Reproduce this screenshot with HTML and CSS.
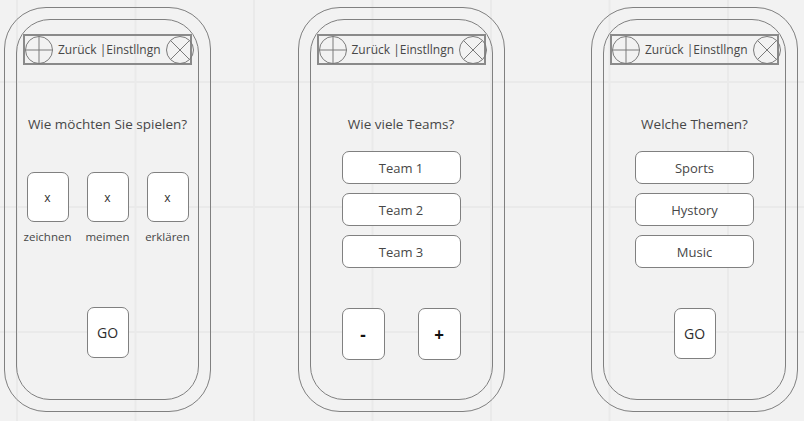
FILE: index.html
```html
<!DOCTYPE html>
<html lang="de">
<head>
    <meta charset="UTF-8">
    <meta name="viewport" content="width=device-width, initial-scale=1.0">
    <title>Spiel Wireframes</title>
    <link rel="stylesheet" href="styles.css">
</head>
<body>
    <div class="board">
        <!-- Screen 1: Spielmodus -->
        <section class="phone">
            <div class="screen">
                <div class="topbar">
                    <svg class="nav-icon" viewBox="0 0 28 28">
                        <circle cx="14" cy="14" r="13.5"/>
                        <path d="M0.5 14H27.5M14 0.5V27.5"/>
                    </svg>
                    <span class="topbar-title">Zurück |Einstllngn</span>
                    <svg class="nav-icon close" viewBox="0 0 28 28">
                        <circle cx="14" cy="14" r="13.5"/>
                        <path d="M4.5 4.5L23.5 23.5M23.5 4.5L4.5 23.5"/>
                    </svg>
                </div>

                <p class="question">Wie möchten Sie spielen?</p>

                <div class="modes">
                    <div class="mode">
                        <button class="tile">x</button>
                        <span class="mode-label">zeichnen</span>
                    </div>
                    <div class="mode">
                        <button class="tile">x</button>
                        <span class="mode-label">meimen</span>
                    </div>
                    <div class="mode">
                        <button class="tile">x</button>
                        <span class="mode-label">erklären</span>
                    </div>
                </div>

                <button class="tile go go-modes">GO</button>
            </div>
        </section>

        <!-- Screen 2: Teams -->
        <section class="phone">
            <div class="screen">
                <div class="topbar">
                    <svg class="nav-icon" viewBox="0 0 28 28">
                        <circle cx="14" cy="14" r="13.5"/>
                        <path d="M0.5 14H27.5M14 0.5V27.5"/>
                    </svg>
                    <span class="topbar-title">Zurück |Einstllngn</span>
                    <svg class="nav-icon close" viewBox="0 0 28 28">
                        <circle cx="14" cy="14" r="13.5"/>
                        <path d="M4.5 4.5L23.5 23.5M23.5 4.5L4.5 23.5"/>
                    </svg>
                </div>

                <p class="question">Wie viele Teams?</p>

                <div class="options">
                    <button class="option">Team 1</button>
                    <button class="option">Team 2</button>
                    <button class="option">Team 3</button>
                </div>

                <div class="stepper">
                    <button class="tile step">-</button>
                    <button class="tile step">+</button>
                </div>
            </div>
        </section>

        <!-- Screen 3: Themen -->
        <section class="phone">
            <div class="screen">
                <div class="topbar">
                    <svg class="nav-icon" viewBox="0 0 28 28">
                        <circle cx="14" cy="14" r="13.5"/>
                        <path d="M0.5 14H27.5M14 0.5V27.5"/>
                    </svg>
                    <span class="topbar-title">Zurück |Einstllngn</span>
                    <svg class="nav-icon close" viewBox="0 0 28 28">
                        <circle cx="14" cy="14" r="13.5"/>
                        <path d="M4.5 4.5L23.5 23.5M23.5 4.5L4.5 23.5"/>
                    </svg>
                </div>

                <p class="question">Welche Themen?</p>

                <div class="options">
                    <button class="option">Sports</button>
                    <button class="option">Hystory</button>
                    <button class="option">Music</button>
                </div>

                <button class="tile go go-topics">GO</button>
            </div>
        </section>
    </div>
</body>
</html>
```

FILE: styles.css
```css
:root {
    --canvas: #f2f2f2;
    --grid-line: #eaeaea;
    --outline: #808080;
    --text: #474747;
    --text-dark: #2e2e2e;
}

* {
    margin: 0;
    padding: 0;
    box-sizing: border-box;
}

body {
    font-family: 'Open Sans', 'Noto Sans', sans-serif;
    color: var(--text);
    background-color: var(--canvas);
    background-image:
        linear-gradient(to right, var(--grid-line) 2px, transparent 2px),
        linear-gradient(to bottom, var(--grid-line) 2px, transparent 2px);
    background-size: 118.5px 100%, 100% 125px;
    background-position: 16px 0, 0 81px;
    height: 421px;
    overflow: hidden;
}

.board {
    display: flex;
    gap: 86.5px;
    padding: 7px 0 0 4px;
}

.phone {
    width: 207px;
    height: 405px;
    border: 1px solid var(--outline);
    border-radius: 42px;
    padding: 11px;
    flex: none;
}

.screen {
    height: 100%;
    border: 1px solid var(--outline);
    border-radius: 34px;
    display: flex;
    flex-direction: column;
    align-items: center;
}

.topbar {
    align-self: stretch;
    margin: 14px 6px 0;
    height: 31px;
    border: 2px solid #8a8a8a;
    display: flex;
    align-items: center;
    gap: 5px;
}

.nav-icon {
    width: 28px;
    height: 28px;
    flex: none;
    fill: none;
    stroke: #7a7a7a;
    stroke-width: 1;
}

.nav-icon.close {
    margin-left: auto;
}

.topbar-title {
    font-size: 12px;
    white-space: nowrap;
    color: var(--text);
}

.question {
    margin-top: 49px;
    font-size: 13.5px;
    line-height: 20px;
}

button {
    font-family: inherit;
    color: var(--text-dark);
    background: #fff;
    border: 1px solid var(--outline);
    cursor: pointer;
}

.tile {
    width: 42px;
    height: 50px;
    border-radius: 7px;
    display: flex;
    align-items: center;
    justify-content: center;
    font-size: 12px;
}

.modes {
    display: flex;
    gap: 18px;
    margin-top: 38px;
}

.mode {
    width: 42px;
    display: flex;
    flex-direction: column;
    align-items: center;
}

.mode-label {
    margin-top: 7px;
    font-size: 11.5px;
    line-height: 16px;
    white-space: nowrap;
}

.go {
    height: 51px;
    font-size: 14px;
}

.go-modes {
    margin-top: 62px;
}

.go-topics {
    margin-top: 40px;
}

.options {
    display: flex;
    flex-direction: column;
    gap: 9px;
    margin-top: 17px;
}

.option {
    width: 119px;
    height: 33px;
    border-radius: 7px;
    font-size: 13px;
    color: var(--text);
}

.stepper {
    display: flex;
    gap: 33px;
    margin-top: 40px;
}

.step {
    width: 43px;
    height: 52px;
    font-size: 17px;
    font-weight: 700;
    color: #111;
}
```
